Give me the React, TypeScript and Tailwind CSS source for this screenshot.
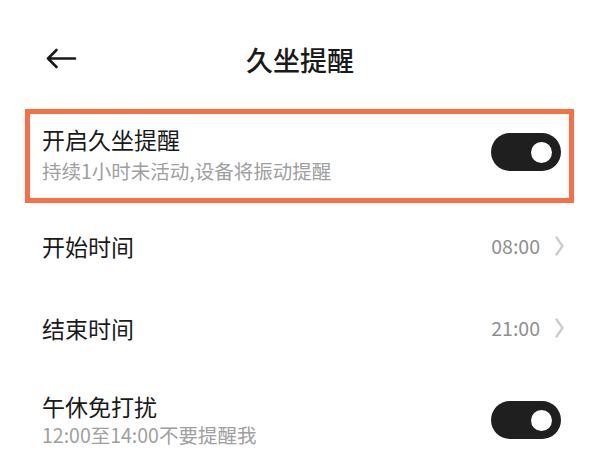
import React from "react";

const font = { fontFamily: '"Noto Sans CJK SC", "Noto Sans", sans-serif' };

const Toggle = ({ className = "" }: { className?: string }) => (
  <div className={`w-[70px] h-[38px] rounded-full bg-[#1f1f1f] flex items-center justify-end pr-[9px] shrink-0 ${className}`}>
    <div className="w-[21px] h-[21px] rounded-full bg-white" />
  </div>
);

const Chevron = () => (
  <svg width="9" height="20" viewBox="0 0 9 20" fill="none" className="ml-[15px]">
    <path d="M1.5 1.5 L7.5 10 L1.5 18.5" stroke="#cccccc" strokeWidth="2.3" strokeLinecap="round" strokeLinejoin="round" />
  </svg>
);

const TimeRow = ({ label, value }: { label: string; value: string }) => (
  <div className="h-[82px] flex items-center justify-between pl-[42px] pr-[36px]">
    <span className="text-[23px] leading-[30px] text-[#1a1a1a]">{label}</span>
    <div className="flex items-center">
      <span className="text-[19.5px] leading-[26px] text-[#8f8f8f]">{value}</span>
      <Chevron />
    </div>
  </div>
);

const App = () => {
  return (
    <div className="w-[600px] h-[450px] bg-white overflow-hidden" style={font}>
      {/* header */}
      <div className="pt-[36px] h-[109px]">
        <div className="relative h-[48px] flex items-center justify-center">
          <svg
            width="32"
            height="22"
            viewBox="0 0 32 22"
            fill="none"
            className="absolute left-[45px] top-[12px]"
          >
            <path d="M30 10.5 H3 M11.5 2 L3 10.5 L11.5 19" stroke="#1a1a1a" strokeWidth="2.6" strokeLinecap="round" strokeLinejoin="round" />
          </svg>
          <span className="text-[27px] leading-[36px] font-medium text-[#1a1a1a]">久坐提醒</span>
        </div>
      </div>

      {/* highlighted row */}
      <div className="ml-[25px] mr-[26px] h-[94px] border-[5px] border-[#f86e45] flex items-start justify-between pl-[12px] pr-[8px]">
        <div className="pt-[10px]">
          <div className="text-[23px] leading-[30px] text-[#1a1a1a]">开启久坐提醒</div>
          <div className="mt-[4px] text-[19.5px] leading-[26px] text-[#a0a0a0]">持续1小时未活动,设备将振动提醒</div>
        </div>
        <Toggle className="mt-[19px]" />
      </div>

      <div className="h-[2px]" />
      <TimeRow label="开始时间" value="08:00" />
      <TimeRow label="结束时间" value="21:00" />

      <div className="flex items-start justify-between pl-[42px] pr-[39px] pt-[22px]">
        <div>
          <div className="text-[23px] leading-[30px] text-[#1a1a1a]">午休免打扰</div>
          <div className="mt-[1px] text-[19.5px] leading-[26px] text-[#a0a0a0]">12:00至14:00不要提醒我</div>
        </div>
        <Toggle className="mt-[10px]" />
      </div>
    </div>
  );
};

export default App;
